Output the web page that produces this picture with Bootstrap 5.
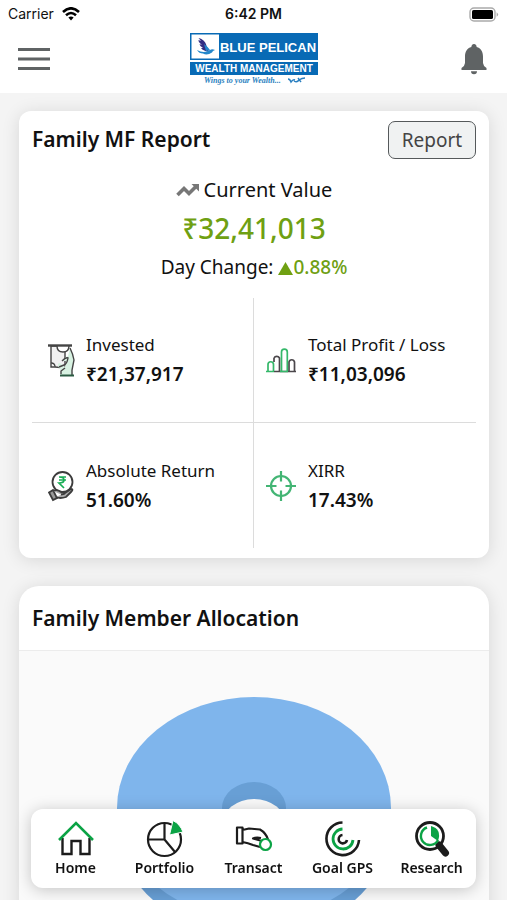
<!DOCTYPE html>
<html lang="en">
<head>
<meta charset="utf-8">
<meta name="viewport" content="width=device-width, initial-scale=1">
<title>Blue Pelican Wealth Management</title>
<link href="https://cdn.jsdelivr.net/npm/bootstrap@5.3.0/dist/css/bootstrap.min.css" rel="stylesheet">
<style>
body { font-family: "Noto Sans", "Open Sans", sans-serif; color: #111; background: #f4f4f4; }
.app-shell { height: 100vh; overflow: hidden; }
.status-bar { font-family: Inter, "Liberation Sans", sans-serif; font-size: 14px; line-height: 28px; padding: 0 8px; }
.status-side { flex: 1 1 0; }
.app-header { height: 65px; padding: 0 18px 4px; }
.icon-btn { border: 0; background: none; padding: 0; line-height: 0; color: #5f6364; }
.app-main { overflow-y: auto; scrollbar-width: none; padding: 18px 18px 0 19px; }
.app-main::-webkit-scrollbar { display: none; }
.panel { background: #fff; border-radius: 12px; box-shadow: 0 2px 18px rgba(0,0,0,.12); }
.report-panel { padding: 10px 13px; }
.alloc-panel { margin-top: 28px; border-radius: 20px; overflow: hidden; }
.alloc-title { padding: 0 13px; line-height: 64px; border-bottom: 1px solid #ececec; }
.chart-area { background: #fafafa; }
.panel-title { font-size: 21px; font-weight: 600; margin: 0; color: #111; }
.report-btn { height: 38px; width: 88px; padding: 0; border: 1px solid #55595b; border-radius: 7px; background: #f0f2f2; color: #444; font-size: 19px; line-height: 34px; }
.value-label { font-size: 20px; line-height: 28px; margin-top: 17px; }
.value-total { font-size: 28px; line-height: 36px; margin-top: 6px; font-weight: 500; color: #6fa012; }
.value-change { font-size: 19px; line-height: 26px; margin-top: 8px; }
.gain { color: #6fa012; font-weight: 500; }
.stat-grid { margin-top: 18px; }
.stat-cell { height: 125px; }
.stat-cell.edge-right { border-right: 1px solid #dcdcdc; }
.stat-cell.edge-bottom { border-bottom: 1px solid #dcdcdc; }
.stat-icon { width: 30px; height: 34px; flex: none; }
.stat-name { font-size: 17px; line-height: 24px; font-weight: 400; }
.stat-value { font-size: 19px; line-height: 26px; margin: 4px 0 0; font-weight: 600; }
.bottom-nav { left: 31px; right: 31px; bottom: 12px; background: #fff; border-radius: 12px; box-shadow: 0 2px 16px rgba(0,0,0,.22); padding: 11px 0 10px; z-index: 5; }
.bottom-nav a { flex: 1 1 0; color: #111; text-decoration: none; font-size: 14px; line-height: 20px; font-weight: 600; }
.bottom-nav svg { width: 38px; height: 38px; }
</style>
</head>
<body>
<div class="app-shell d-flex flex-column">
  <div class="bg-white">
    <div class="status-bar d-flex align-items-center">
      <div class="status-side d-flex align-items-center gap-2">
        <span>Carrier</span>
        <svg width="18" height="14" viewBox="0 0 18 14" fill="none" stroke="#000" stroke-width="2.6" aria-hidden="true"><path d="M1 5Q9-2.4 17 5M4 8.2Q9 3.8 14 8.2"/><path d="M6.4 10.6Q9 8.2 11.6 10.6L9 13.4z" fill="#000" stroke="none"/></svg>
      </div>
      <span class="fw-semibold">6:42 PM</span>
      <div class="status-side d-flex justify-content-end">
        <svg width="30" height="15" viewBox="0 0 30 15" aria-hidden="true"><rect x="1" y="1" width="25" height="13" rx="4" fill="#fff" stroke="#aaa" stroke-width="1.4"/><rect x="3" y="3" width="21" height="9" rx="1.6"/><path d="M27.6 5.2q3 2.3 0 4.6z" fill="#aaa"/></svg>
      </div>
    </div>
    <header class="app-header d-flex align-items-center justify-content-between">
      <button class="icon-btn" type="button" aria-label="Menu"><svg width="32" height="24" viewBox="0 0 32 24" stroke="currentColor" stroke-width="3"><path d="M0 2.5H32M0 12H32M0 21.5H32"/></svg></button>
      <svg width="130" height="54" viewBox="0 0 130 54" role="img" aria-label="Blue Pelican Wealth Management" font-family="Liberation Sans, Arial, sans-serif">
        <path fill="#086ab5" d="M0 1H128V28H0zM0 30H128V43H0z"/>
        <path fill="#fff" d="M1.5 2.5H29V26.5H1.5z"/>
        <path fill="#332e83" d="M8.5 6Q11 6 13.5 8.5Q17 12 17 17L20 20Q13 19 11 16L13 16Q9.5 14 9.5 12L12 13Q8 10 8.5 8L11 9z"/>
        <path fill="#2387cb" d="M7 18Q14 22 20 18Q22 16.5 25 18Q22.5 18.5 22 20.5Q17 24 13 21.5Q9 21.5 7 18zM14 12Q17 14 20 18L16 19z"/>
        <text x="78" y="20" font-size="13" font-weight="700" fill="#fff" text-anchor="middle">BLUE PELICAN</text>
        <text x="64" y="40" font-size="10" font-weight="700" fill="#fff" text-anchor="middle">WEALTH MANAGEMENT</text>
        <text x="14" y="51" font-size="8" font-weight="700" font-style="italic" font-family="Liberation Serif, serif" fill="#2a7fc0">Wings to your Wealth...</text>
        <path d="M98 47q2 0 3 3q2-3 4-2M104 49q3 2 5-1q3-2 6-2M108 46l3 4" fill="none" stroke="#2a7fc0" stroke-width="1.4"/>
      </svg>
      <button class="icon-btn" type="button" aria-label="Notifications"><svg width="30" height="34" viewBox="0 0 30 34" fill="currentColor"><path d="M15 2a2.6 2.6 0 0 1 2.6 3C22 6 24 10 24 14.500V21q0 2.500 3.500 5V28H2.500V26Q6 23.500 6 21V14.500C6 10 8 6 12.400 5A2.600 2.600 0 0 1 15 2zM12 29.200h6a3 3 0 0 1-6 0z"/></svg></button>
    </header>
  </div>

  <main class="app-main flex-grow-1">
    <section class="panel report-panel">
      <div class="d-flex align-items-center justify-content-between">
        <h1 class="panel-title">Family MF Report</h1>
        <button class="report-btn" type="button">Report</button>
      </div>
      <div class="text-center">
        <div class="value-label d-flex align-items-center justify-content-center gap-1">
          <svg width="24" height="14" viewBox="0 0 24 14" fill="none" stroke="#777" stroke-width="3.6" aria-hidden="true"><path d="M1.500 12L8 5.500L13 10.500L20 3.500"/><path d="M15.500 1H23V8.500z" fill="#777" stroke="none"/></svg>
          <span>Current Value</span>
        </div>
        <div class="value-total">₹32,41,013</div>
        <div class="value-change">Day Change: <span class="gain"><svg width="15" height="13" viewBox="0 0 15 13" fill="currentColor" aria-hidden="true"><path d="M7.500 0L15 13H0z"/></svg>0.88%</span></div>
      </div>
      <dl class="stat-grid row g-0 mb-0">
        <div class="stat-cell edge-right edge-bottom col-6 d-flex align-items-center ps-3 gap-2">
          <svg class="stat-icon" viewBox="0 0 30 34" fill="none" stroke="#444" stroke-width="1.4" aria-hidden="true"><path d="M3 3V24H7L17 25V3z" fill="#f1f1f1"/><path d="M9 3q0 6 6 6t6-6M3 20q4 0 4 4" fill="#fff"/><path d="M12.500 33L13 28L10 23Q9.500 20 12 20L17 24L18.500 18L14 18Q17 14 20 13L22 5Q25 11 26 17L24 27L25 33z" fill="#d8f2e2" stroke="none"/><path d="M22 5Q25 11 26 17L24 27V32M13 31V28L17 25M14 18Q18 14 20 15Q19 21 16 22L11 24"/><path d="M12 32.500H26" stroke="#2a5b43" stroke-width="2"/><path d="M0 2.500H24" stroke-width="2.400"/></svg>
          <div><dt class="stat-name">Invested</dt><dd class="stat-value">₹21,37,917</dd></div>
        </div>
        <div class="stat-cell edge-bottom col-6 d-flex align-items-center ps-2 gap-2">
          <svg class="stat-icon ms-1 me-1" viewBox="0 0 30 34" fill="none" stroke-width="1.7" aria-hidden="true"><path d="M8 15a3.200 3.200 0 0 1 5.500 0V28M8 15V19M23 28V19a2.800 2.800 0 0 1 5.500 0V28M8 28.500H30" stroke="#4b474b"/><path d="M2 28V21.500a2.700 2.700 0 0 1 5.500 0V28M15.500 28V9a2.900 2.900 0 0 1 5.800 0V28M0 28.500H8M14 28.500H22" stroke="#35b86a"/></svg>
          <div><dt class="stat-name">Total Profit / Loss</dt><dd class="stat-value">₹11,03,096</dd></div>
        </div>
        <div class="stat-cell edge-right col-6 d-flex align-items-center ps-3 gap-2">
          <svg class="stat-icon" viewBox="0 0 30 34" fill="none" stroke="#3c3c3c" stroke-width="1.8" aria-hidden="true"><circle cx="14.500" cy="13" r="10"/><path d="M11 8H18M11 11H18M11 8q5 0 5 3t-5 3l5 5" stroke="#18ad55" stroke-width="1.700"/><path d="M1 23.500L5 21L9 29L5 31z" fill="#999"/><path d="M5 22Q9 20 13 23H17Q18 25 13 25.500M17 24L23 20Q26 20 23 23L18 28Q12 30 8 28" fill="#aaa"/></svg>
          <div><dt class="stat-name">Absolute Return</dt><dd class="stat-value">51.60%</dd></div>
        </div>
        <div class="stat-cell col-6 d-flex align-items-center ps-2 gap-2">
          <svg class="stat-icon ms-1 me-1" viewBox="0 0 30 34" fill="none" stroke="#43b574" stroke-width="2.2" aria-hidden="true"><circle cx="15" cy="17" r="10"/><path d="M15 2V12.500M15 21.500V32M0 17H10.500M19.500 17H30"/></svg>
          <div><dt class="stat-name">XIRR</dt><dd class="stat-value">17.43%</dd></div>
        </div>
      </dl>
    </section>

    <section class="panel alloc-panel">
      <h2 class="panel-title alloc-title">Family Member Allocation</h2>
      <div class="chart-area">
        <svg class="d-block w-100" viewBox="0 0 470 330" role="img" aria-label="Family member allocation chart">
          <defs><clipPath id="hole"><ellipse cx="235" cy="157" rx="32" ry="26"/></clipPath></defs>
          <path d="M98 157V174A137 111 0 0 0 372 174V157z" fill="#689fd5"/>
          <ellipse cx="235" cy="157" rx="137" ry="111" fill="#7fb5ec"/>
          <g clip-path="url(#hole)"><path d="M200 130H270V190H200z" fill="#689fd5"/><ellipse cx="235" cy="174" rx="32" ry="26" fill="#fafafa"/></g>
        </svg>
      </div>
    </section>
  </main>

  <nav class="bottom-nav position-fixed d-flex text-center" aria-label="Main">
    <a href="#home"><svg viewBox="0 0 38 38" fill="none" stroke="#1c1c1c" stroke-width="2.4" aria-hidden="true"><path d="M5.500 18V34H14.500V21H23.500V34H32.500V18"/><path d="M2 20L19 3L36 20" stroke="#0ba345" stroke-width="2.600"/></svg><div>Home</div></a>
    <a href="#portfolio"><svg viewBox="0 0 38 38" fill="none" stroke="#1c1c1c" stroke-width="2.2" aria-hidden="true"><circle cx="18.500" cy="19.500" r="16.500"/><path d="M18.500 3V19.500H2M18.500 19.500L29 32"/><path d="M27 .500Q34 4 37 12L23.500 15z" fill="#0ba345" stroke="#fff" stroke-width="1"/></svg><div>Portfolio</div></a>
    <a href="#transact"><svg viewBox="0 0 38 38" fill="none" stroke="#1c1c1c" stroke-width="2.2" stroke-linejoin="round" aria-hidden="true"><path d="M2 7.500H7.500V23.500H2zM7.500 10L14 8.500L25 9.500Q31 13 33 19.500M7.500 22Q13 23 18 25L25 27M27 21L18 18.500Q21 17 26 18"/><circle cx="30.500" cy="24.500" r="5.500" stroke="#0ba345"/></svg><div>Transact</div></a>
    <a href="#goal"><svg viewBox="0 0 38 38" fill="none" stroke="#1c1c1c" stroke-width="2.6" aria-hidden="true"><path d="M18.500 2.500A16.300 16.300 0 1 0 35 20M18.500 15A4.200 4.200 0 1 0 23 20"/><path d="M18.500 9A10 10 0 1 0 29 20" stroke="#0ba345" stroke-width="2.800"/></svg><div>Goal GPS</div></a>
    <a href="#research"><svg viewBox="0 0 38 38" fill="none" stroke="#1c1c1c" stroke-width="2.8" aria-hidden="true"><circle cx="17" cy="16" r="13.500"/><path d="M26 25L32.500 33" stroke-width="7" stroke-linecap="round"/><path d="M14 7.500A9 9 0 1 0 25 20" stroke="#0ba345" stroke-width="2.4"/><path d="M18 6V16L25 21Q29 9 18 6z" fill="#0ba345" stroke="none"/></svg><div>Research</div></a>
  </nav>
</div>
<script src="https://cdn.jsdelivr.net/npm/bootstrap@5.3.0/dist/js/bootstrap.bundle.min.js"></script>
</body>
</html>
